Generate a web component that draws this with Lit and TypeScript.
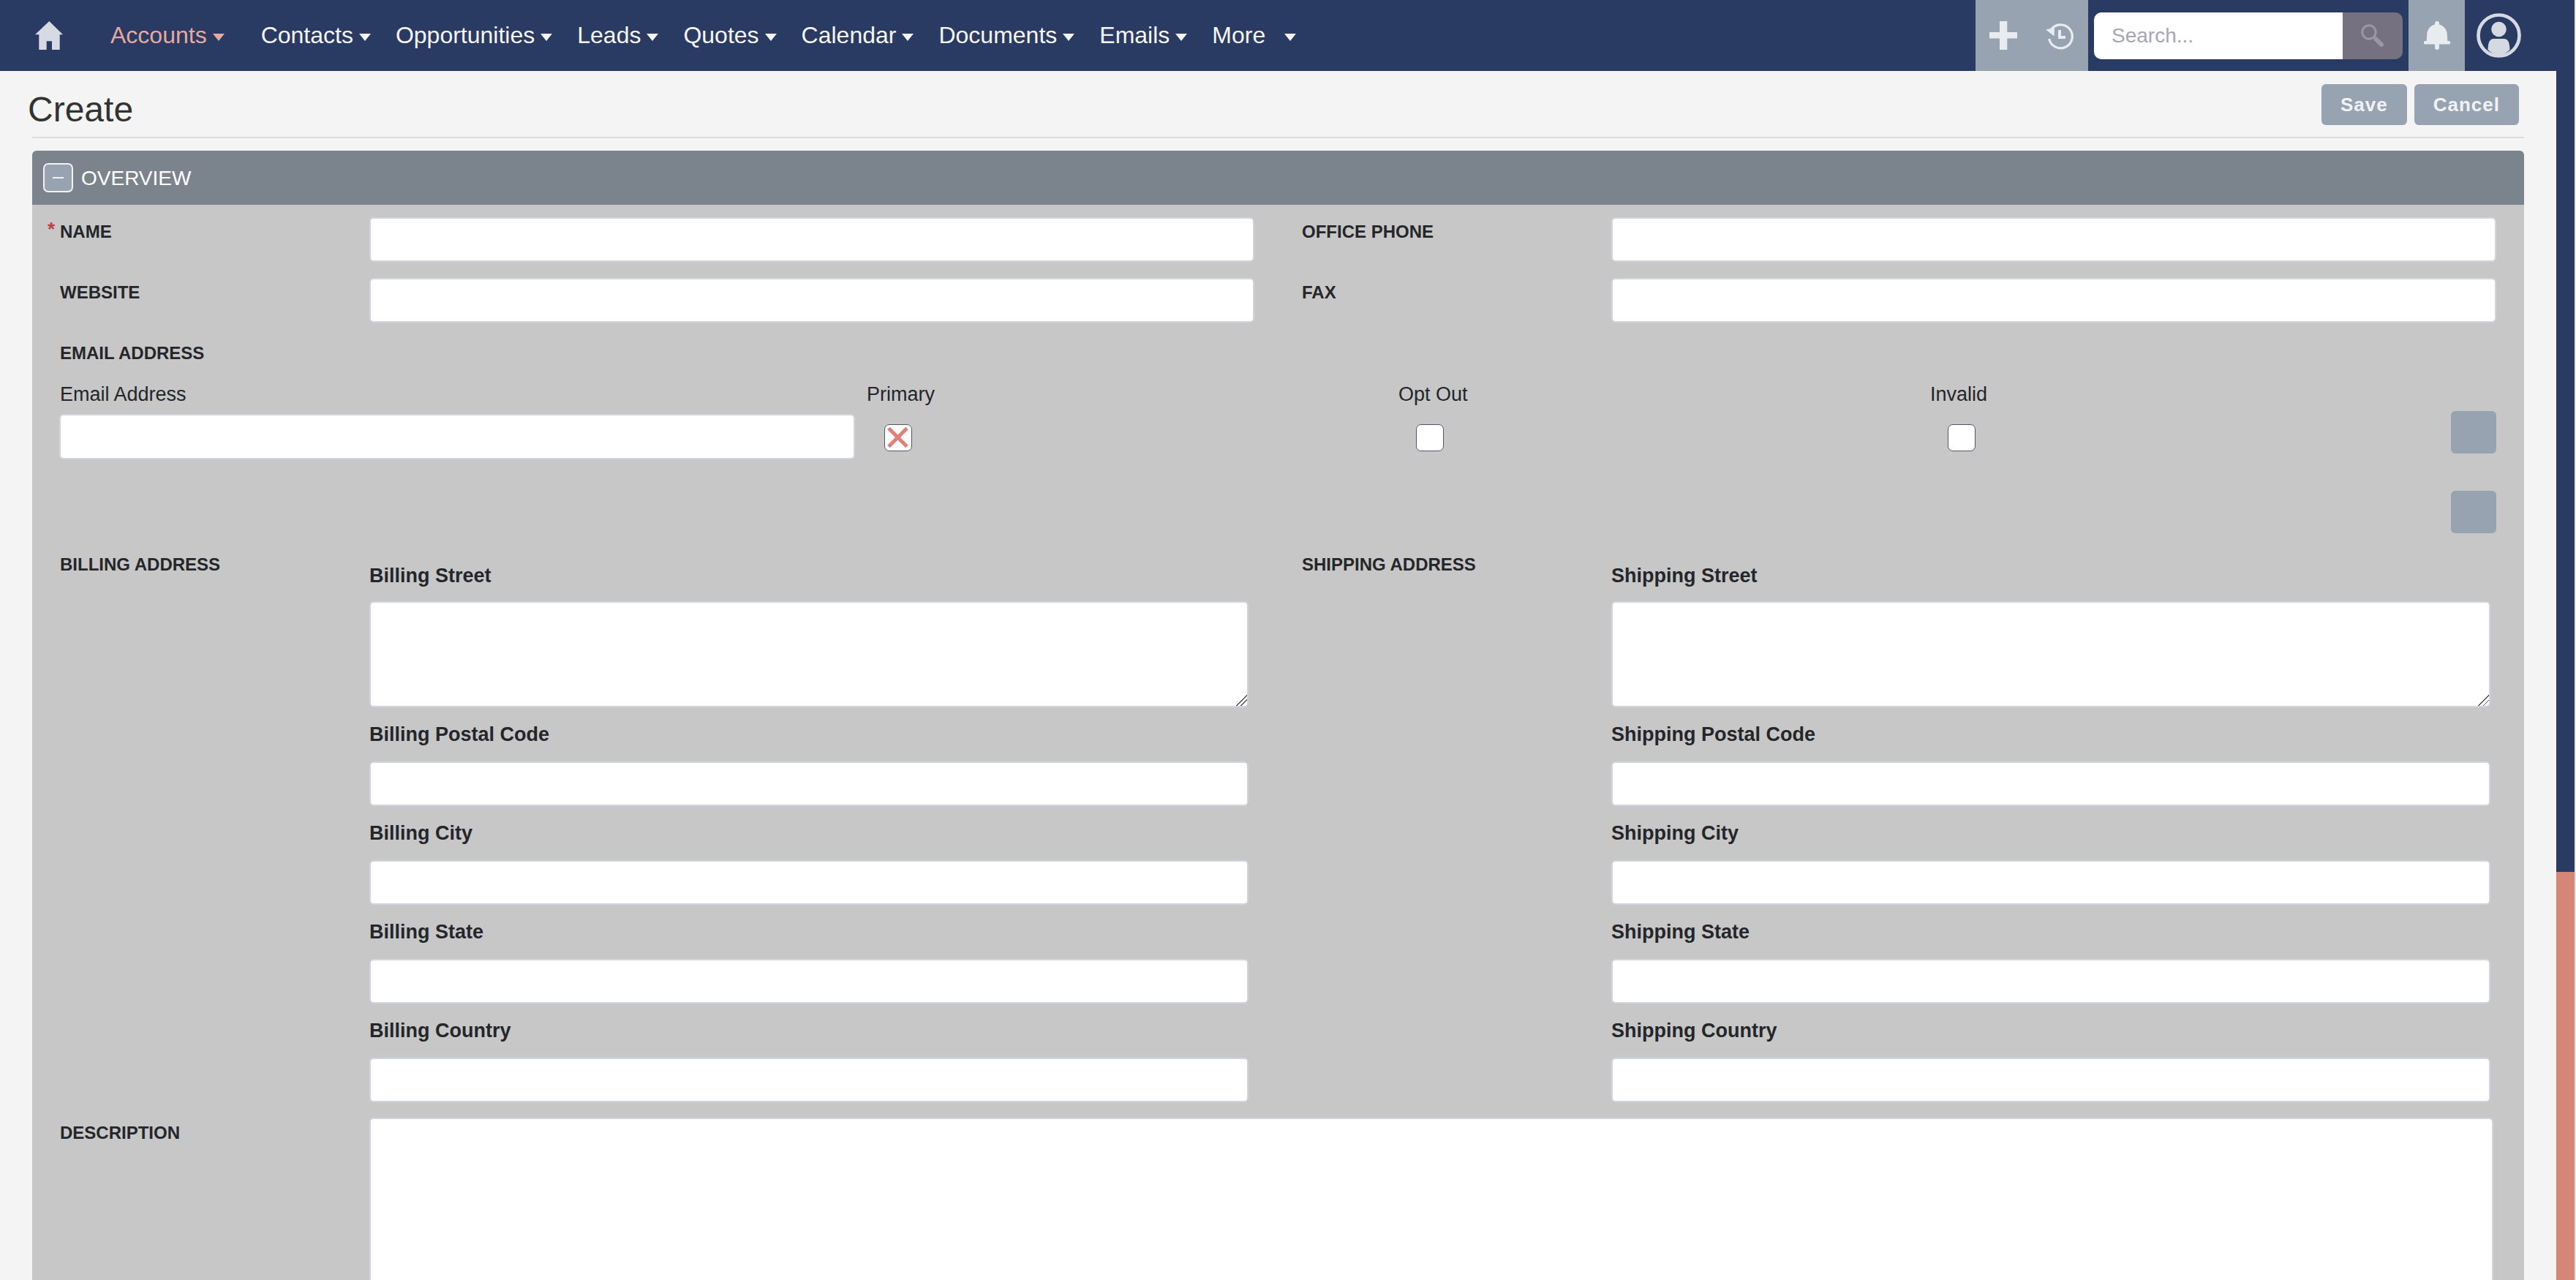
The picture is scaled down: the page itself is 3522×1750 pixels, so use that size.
import { LitElement, css, html } from "lit";
import { customElement } from "lit/decorators.js";

const NAV = ["Accounts", "Contacts", "Opportunities", "Leads", "Quotes", "Calendar", "Documents", "Emails", "More"];
const BILLING = ["Billing Postal Code", "Billing City", "Billing State", "Billing Country"];
const SHIPPING = ["Shipping Postal Code", "Shipping City", "Shipping State", "Shipping Country"];

@customElement("app-root")
export class AppRoot extends LitElement {
  static styles = css`
    :host {
      display: flex;
      height: 1750px;
      overflow: hidden;
      background: #f4f4f4;
      font-family: "Liberation Sans", Arial, sans-serif;
      color: #252729;
    }
    * {
      box-sizing: border-box;
    }
    .main {
      flex: 1;
      min-width: 0;
      overflow: hidden;
    }
    .scrollbar {
      width: 27px;
      flex: none;
      display: flex;
      flex-direction: column;
      background: #293a63;
      border-right: 2px solid #e6e6e6;
    }
    .scroll-space {
      height: 1192px;
    }
    .scroll-thumb {
      flex: 1;
      background: #d58676;
    }

    /* top bar */
    .topbar {
      height: 97px;
      display: flex;
      align-items: center;
      background: #293a63;
      padding: 0 48px;
    }
    .home {
      width: 38px;
      height: 40px;
      margin-right: 65px;
      flex: none;
      display: block;
    }
    .nav {
      display: flex;
      gap: 34px;
      list-style: none;
      margin: 0;
      padding: 0;
    }
    .nav li {
      display: flex;
      align-items: center;
      gap: 8px;
      font-size: 32px;
      color: #f6f6f8;
    }
    .nav li.active {
      color: #e6a99e;
      margin-right: 16px;
    }
    .nav li.more {
      gap: 26px;
    }
    .caret {
      width: 0;
      height: 0;
      margin-top: 4px;
      border-left: 8.5px solid transparent;
      border-right: 8.5px solid transparent;
      border-top: 10px solid currentColor;
    }
    .right {
      margin-left: auto;
      height: 97px;
      display: flex;
      align-items: center;
    }
    .tool-block {
      height: 97px;
      background: #98a3b2;
      display: flex;
      align-items: center;
    }
    .tool-block.actions {
      width: 154px;
      padding-left: 19px;
      gap: 38px;
      margin-right: 8px;
    }
    .tool-block.bell {
      width: 77px;
      justify-content: center;
      margin-left: 8px;
      margin-right: 16px;
    }
    .tool-block svg,
    .user {
      display: block;
      flex: none;
    }
    .search {
      width: 422px;
      height: 64px;
      display: flex;
      border-radius: 10px;
      overflow: hidden;
    }
    .search input {
      width: 340px;
      height: 64px;
      border: 0;
      outline: 0;
      padding: 0 24px;
      font: 28px "Liberation Sans", Arial, sans-serif;
      color: #333;
      background: #fff;
    }
    .search input::placeholder {
      color: #a8a6b2;
      opacity: 1;
    }
    .search-btn {
      flex: 1;
      background: #767181;
      display: flex;
      align-items: center;
      justify-content: center;
    }

    /* page title */
    .title-row {
      height: 90px;
      display: flex;
      justify-content: space-between;
      align-items: flex-start;
      padding: 18px 51px 0 38px;
    }
    h1 {
      margin: 7px 0 0;
      font-size: 48px;
      line-height: 56px;
      font-weight: 400;
      color: #333;
    }
    .buttons {
      display: flex;
      gap: 10px;
    }
    .btn {
      height: 56px;
      padding: 0 26px;
      display: flex;
      align-items: center;
      background: #98a3b2;
      border-radius: 6px;
      color: #f1f2f4;
      font-size: 26px;
      font-weight: 700;
      letter-spacing: 1px;
    }
    .divider {
      height: 2px;
      margin: 0 44px 17px;
      background: #dcdcdc;
    }

    /* panel */
    .panel {
      margin: 0 44px;
    }
    .panel-head {
      height: 74px;
      display: flex;
      align-items: center;
      gap: 11px;
      padding-left: 15px;
      background: #7b848d;
      border-radius: 6px 6px 0 0;
      color: #fff;
      font-size: 28px;
    }
    .panel-title {
      padding-top: 2px;
    }
    .collapse {
      width: 41px;
      height: 40px;
      display: flex;
      align-items: center;
      justify-content: center;
      background: #98a3b2;
      border: 2.5px solid #f2f3f5;
      border-radius: 7px;
    }
    .collapse span {
      width: 15px;
      height: 2.5px;
      background: #f2f3f5;
    }
    .panel-body {
      background: #c7c7c7;
      padding: 17px 37px 0;
    }
    .two-col {
      display: flex;
      gap: 64px;
      margin-bottom: 22px;
    }
    .half {
      width: 1634px;
      display: flex;
    }
    .half.second {
      width: 1634px;
    }
    .half .label {
      width: 424px;
    }
    .label {
      flex: none;
      position: relative;
      padding: 6px 0 0 1px;
      font-size: 24px;
      line-height: 28px;
      font-weight: 700;
      color: #24262a;
    }
    .label.low {
      padding-top: 7px;
    }
    .req {
      position: absolute;
      left: -16px;
      top: 2px;
      font-size: 26px;
      color: #c43a4a;
    }
    input.text,
    textarea {
      display: block;
      width: 100%;
      height: 61px;
      margin: 0;
      padding: 0 12px;
      background: #fff;
      border: 2px solid #d2d5de;
      border-radius: 6px;
      outline: 0;
    }
    textarea::-webkit-resizer {
      background: linear-gradient(
        135deg,
        transparent 48%,
        #555 48%,
        #555 54%,
        transparent 54%,
        transparent 70%,
        #555 70%,
        #555 76%,
        transparent 76%
      );
    }

    /* email block */
    .email-grid {
      display: grid;
      grid-template-columns: 1103px 727px 727px 1fr;
      grid-template-rows: 35px auto;
      row-gap: 9px;
      margin-top: 25px;
    }
    .sub {
      padding-left: 1px;
      font-size: 27px;
      line-height: 35px;
      color: #24262a;
    }
    input.email-input {
      width: 1088px;
      height: 62px;
    }
    .check {
      width: 38px;
      height: 37px;
      margin: 14px 0 0 25px;
      display: block;
      background: #fff;
      border: 1.5px solid #55536f;
      border-radius: 7px;
    }
    .check svg {
      display: block;
    }
    .last-cell {
      display: flex;
      justify-content: space-between;
    }
    .square-btn {
      width: 62px;
      height: 58px;
      margin-right: 1px;
      background: #98a3b2;
      border-radius: 6px;
    }
    .last-cell .square-btn {
      margin-top: -4px;
    }
    .add-row {
      display: flex;
      justify-content: flex-end;
      margin-top: 43px;
      margin-bottom: 22px;
    }

    /* addresses */
    .address {
      width: 1202px;
      padding-top: 19px;
    }
    .field {
      margin-bottom: 20px;
    }
    .field:last-child {
      margin-bottom: 0;
    }
    .field-label {
      font-size: 27px;
      line-height: 35px;
      font-weight: 700;
      color: #24262a;
      margin-bottom: 19px;
    }
    .field-label.street {
      margin-bottom: 17px;
    }
    textarea.street-box {
      height: 145px;
    }
    .address-row {
      margin-bottom: 21px;
    }
    .desc-row {
      display: flex;
    }
    .desc-row .label {
      width: 424px;
    }
    textarea.desc {
      width: 2904px;
      height: 400px;
    }
  `;

  private field(name: string) {
    return html`<div class="field">
      <div class="field-label">${name}</div>
      <input class="text" type="text" />
    </div>`;
  }

  private address(street: string, rest: string[]) {
    return html`<div class="address">
      <div class="field">
        <div class="field-label street">${street}</div>
        <textarea class="street-box"></textarea>
      </div>
      ${rest.map((r) => this.field(r))}
    </div>`;
  }

  render() {
    return html`
      <div class="main">
        <header class="topbar">
          <svg class="home" viewBox="0 0 38 40">
            <path d="M19.3 0 38 18.3H33.7V39H23V27.3H15.7V39H5.3V18.3H0Z" fill="#d5dae3" />
          </svg>
          <ul class="nav">
            ${NAV.map(
              (n, i) => html`<li class="${i === 0 ? "active" : n === "More" ? "more" : ""}">
                ${n}<span class="caret"></span>
              </li>`
            )}
          </ul>
          <div class="right">
            <div class="tool-block actions">
              <svg width="38" height="39" viewBox="0 0 38 39">
                <path d="M14 0H24.3V15H38V23.6H24.3V39H14V23.6H0V15H14Z" fill="#e8ecef" />
              </svg>
              <svg width="40" height="38" viewBox="0 0 40 38">
                <path d="M8.2 10.6A16 16 0 1 1 5.6 23" fill="none" stroke="#e8ecef" stroke-width="3.2" />
                <path d="M1 10.5 12.5 19.5 13 8Z" fill="#e8ecef" />
                <path d="M20 11V21H28" fill="none" stroke="#e8ecef" stroke-width="4" />
              </svg>
            </div>
            <div class="search">
              <input type="text" placeholder="Search..." />
              <div class="search-btn">
                <svg width="32" height="32" viewBox="0 0 32 32">
                  <circle cx="11" cy="11" r="9.2" fill="none" stroke="#9b97a6" stroke-width="3" />
                  <path d="M20.5 20.5 28 28" fill="none" stroke="#9b97a6" stroke-width="6" stroke-linecap="round" />
                </svg>
              </div>
            </div>
            <div class="tool-block bell">
              <svg width="36" height="39" viewBox="0 0 36 39">
                <path
                  d="M18 0a3 3 0 0 1 3 3v1.6C27 6 31.5 11.5 31.8 18L32.3 27H34a2.2 2.2 0 0 1 0 4.6H2A2.2 2.2 0 0 1 2 27H3.7L4.2 18C4.5 11.5 9 6 15 4.6V3a3 3 0 0 1 3-3Z"
                  fill="#e8ecef"
                />
                <path d="M15 31h6v5a3 3 0 0 1-6 0Z" fill="#e8ecef" />
              </svg>
            </div>
            <svg class="user" width="61" height="61" viewBox="0 0 61 61">
              <circle cx="30.5" cy="30.5" r="28" fill="none" stroke="#d4d9e2" stroke-width="4.7" />
              <circle cx="30.5" cy="22" r="10.3" fill="#d4d9e2" />
              <path d="M15.5 50C16 42 16.5 35 24 35H37C44.5 35 45 42 45.5 50 41 54.5 36 57 30.5 57S20 54.5 15.5 50Z" fill="#d4d9e2" />
            </svg>
          </div>
        </header>

        <div class="title-row">
          <h1>Create</h1>
          <div class="buttons">
            <div class="btn">Save</div>
            <div class="btn">Cancel</div>
          </div>
        </div>
        <div class="divider"></div>

        <section class="panel">
          <div class="panel-head">
            <div class="collapse"><span></span></div>
            <div class="panel-title">OVERVIEW</div>
          </div>
          <div class="panel-body">
            <div class="two-col">
              <div class="half">
                <div class="label"><span class="req">*</span>NAME</div>
                <input class="text" type="text" />
              </div>
              <div class="half second">
                <div class="label">OFFICE PHONE</div>
                <input class="text" type="text" />
              </div>
            </div>
            <div class="two-col">
              <div class="half">
                <div class="label">WEBSITE</div>
                <input class="text" type="text" />
              </div>
              <div class="half second">
                <div class="label">FAX</div>
                <input class="text" type="text" />
              </div>
            </div>

            <div class="label">EMAIL ADDRESS</div>
            <div class="email-grid">
              <div class="sub">Email Address</div>
              <div class="sub">Primary</div>
              <div class="sub">Opt Out</div>
              <div class="sub">Invalid</div>
              <input class="text email-input" type="text" />
              <span class="check">
                <svg width="35" height="34" viewBox="0 0 35 34">
                  <path d="M5 4.5 30 29.5M30 4.5 5 29.5" stroke="#de8076" stroke-width="5" fill="none" />
                </svg>
              </span>
              <span class="check"></span>
              <div class="last-cell">
                <span class="check"></span>
                <div class="square-btn"></div>
              </div>
            </div>
            <div class="add-row"><div class="square-btn"></div></div>

            <div class="two-col address-row">
              <div class="half">
                <div class="label low">BILLING ADDRESS</div>
                ${this.address("Billing Street", BILLING)}
              </div>
              <div class="half second">
                <div class="label low">SHIPPING ADDRESS</div>
                ${this.address("Shipping Street", SHIPPING)}
              </div>
            </div>

            <div class="desc-row">
              <div class="label low">DESCRIPTION</div>
              <textarea class="desc"></textarea>
            </div>
          </div>
        </section>
      </div>
      <div class="scrollbar">
        <div class="scroll-space"></div>
        <div class="scroll-thumb"></div>
      </div>
    `;
  }
}
